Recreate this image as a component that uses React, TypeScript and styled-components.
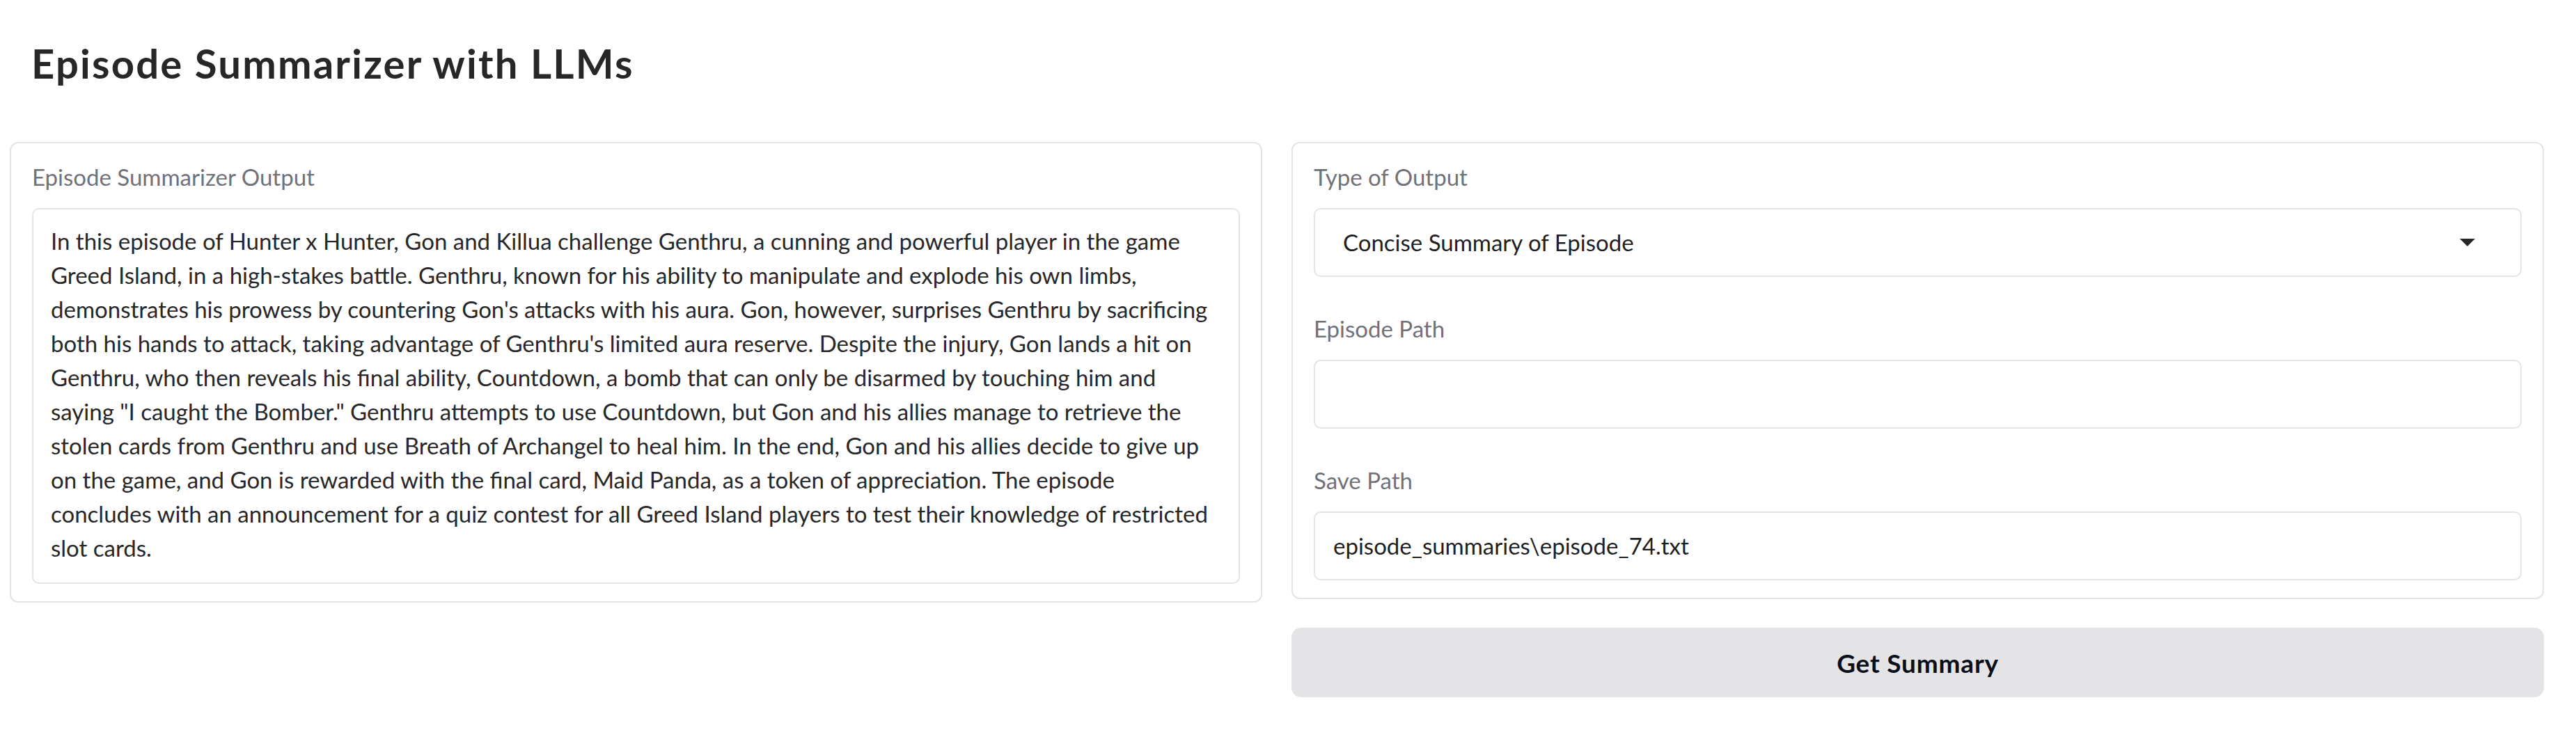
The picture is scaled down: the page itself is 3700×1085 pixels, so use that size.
import React from "react";
import styled, { createGlobalStyle } from "styled-components";

const GlobalStyle = createGlobalStyle`
  html, body {
    margin: 0;
    padding: 0;
    background: #ffffff;
  }
  body {
    font-family: Lato, "Noto Sans", "Liberation Sans", sans-serif;
    color: #27272a;
  }
  * {
    box-sizing: border-box;
  }
`;

const Page = styled.div`
  padding: 0 46px 0 14px;
`;

const Title = styled.h1`
  margin: 0;
  padding: 57px 0 0 31px;
  height: 204px;
  font-size: 58px;
  line-height: 68px;
  letter-spacing: 2.2px;
  font-weight: 700;
  color: #27272a;
`;

const Row = styled.div`
  display: grid;
  grid-template-columns: 1fr 1fr;
  column-gap: 42px;
  align-items: start;
`;

const Column = styled.div`
  display: flex;
  flex-direction: column;
  gap: 41px;
`;

const Panel = styled.div`
  border: 2px solid #e4e4e7;
  border-radius: 12px;
  background: #ffffff;
  padding: 24px 30px 25px 30px;
  display: flex;
  flex-direction: column;
  gap: 50px;
`;

const Field = styled.div`
  display: flex;
  flex-direction: column;
  gap: 20px;
`;

const Label = styled.span`
  font-size: 33px;
  line-height: 49px;
  color: #71717a;
`;

const OutputBox = styled.div`
  border: 2px solid #e4e4e7;
  border-radius: 10px;
  padding: 21px 25px 25px 25px;
  font-size: 33px;
  line-height: 49px;
  color: #27272a;
  white-space: pre-wrap;
`;

const InputBox = styled.div<{ $pad: number }>`
  display: flex;
  align-items: center;
  height: 99px;
  border: 2px solid #e4e4e7;
  border-radius: 10px;
  padding: 0 ${(p) => p.$pad}px;
  font-size: 33px;
  line-height: 49px;
  color: #1f1f23;
`;

const Caret = styled.span`
  margin-left: auto;
  margin-right: 25px;
  width: 0;
  height: 0;
  border-left: 11px solid transparent;
  border-right: 11px solid transparent;
  border-top: 11px solid #27272a;
`;

const Button = styled.button`
  height: 100px;
  border: none;
  border-radius: 14px;
  background: #e4e4e7;
  font-family: Lato, "Noto Sans", "Liberation Sans", sans-serif;
  font-size: 37px;
  letter-spacing: 0.8px;
  font-weight: 700;
  color: #0b0f19;
  cursor: pointer;
`;

const summary =
  'In this episode of Hunter x Hunter, Gon and Killua challenge Genthru, a cunning and powerful player in the game Greed Island, in a high-stakes battle. Genthru, known for his ability to manipulate and explode his own limbs, demonstrates his prowess by countering Gon\'s attacks with his aura. Gon, however, surprises Genthru by sacrificing both his hands to attack, taking advantage of Genthru\'s limited aura reserve. Despite the injury, Gon lands a hit on Genthru, who then reveals his final ability, Countdown, a bomb that can only be disarmed by touching him and saying "I caught the Bomber." Genthru attempts to use Countdown, but Gon and his allies manage to retrieve the stolen cards from Genthru and use Breath of Archangel to heal him. In the end, Gon and his allies decide to give up on the game, and Gon is rewarded with the final card, Maid Panda, as a token of appreciation. The episode concludes with an announcement for a quiz contest for all Greed Island players to test their knowledge of restricted slot cards.';

const App = () => {
  return (
    <>
      <GlobalStyle />
      <Page>
        <Title>Episode Summarizer with LLMs</Title>
        <Row>
          <Panel>
            <Field>
              <Label>Episode Summarizer Output</Label>
              <OutputBox>{summary}</OutputBox>
            </Field>
          </Panel>
          <Column>
            <Panel>
              <Field>
                <Label>Type of Output</Label>
                <InputBox $pad={40}>
                  Concise Summary of Episode
                  <Caret />
                </InputBox>
              </Field>
              <Field>
                <Label>Episode Path</Label>
                <InputBox $pad={26} />
              </Field>
              <Field>
                <Label>Save Path</Label>
                <InputBox $pad={26}>episode_summaries\episode_74.txt</InputBox>
              </Field>
            </Panel>
            <Button>Get Summary</Button>
          </Column>
        </Row>
      </Page>
    </>
  );
};

export default App;
